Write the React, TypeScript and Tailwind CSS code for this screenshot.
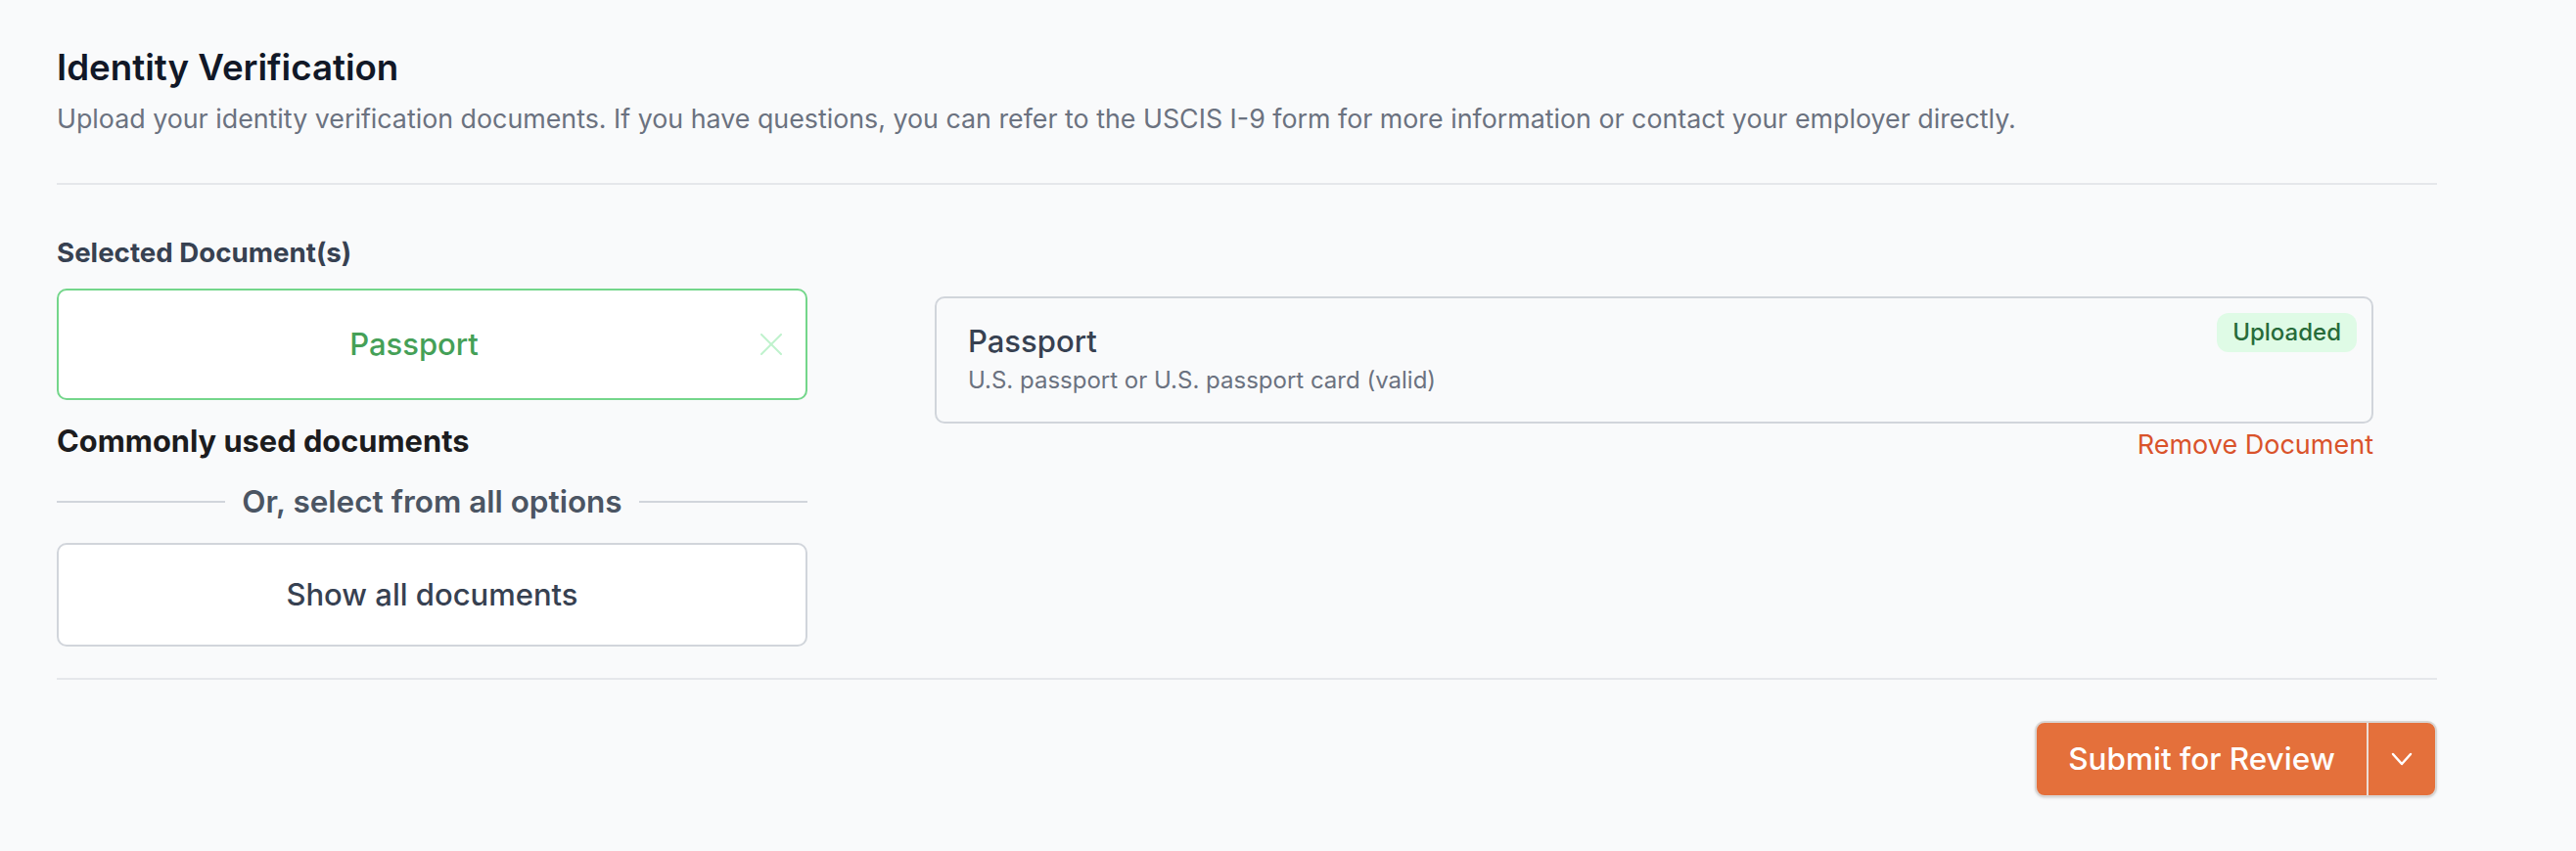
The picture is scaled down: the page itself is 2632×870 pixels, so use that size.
import React from "react";

function CloseIcon() {
  return (
    <svg width="22" height="22" viewBox="0 0 22 22" fill="none" stroke="#bff2cd" strokeWidth="2" strokeLinecap="round">
      <path d="M1 1 21 21" />
      <path d="M21 1 1 21" />
    </svg>
  );
}

function Chevron() {
  return (
    <svg width="22" height="14" viewBox="0 0 22 14" fill="none" stroke="#ffffff" strokeWidth="2.5" strokeLinecap="round" strokeLinejoin="round">
      <path d="M2 2 11 12 20 2" />
    </svg>
  );
}

export default function App() {
  return (
    <div className="min-h-screen bg-[#f9fafb] font-['Inter',sans-serif]">
      <div className="w-[2432px] ml-[58px] pt-[46px]">
        {/* Header */}
        <h1 className="text-[36.7px] leading-[46px] font-semibold text-[#111827]">Identity Verification</h1>
        <p className="mt-[12px] text-[26.8px] leading-[34px] text-[#6b7280]">
          Upload your identity verification documents. If you have questions, you can refer to the USCIS I-9 form for
          more information or contact your employer directly.
        </p>
        <div className="mt-[49px] h-[2px] bg-[#e5e7eb]" />

        {/* Documents */}
        <div className="flex mt-[52px]">
          <div className="w-[767px] shrink-0">
            <div className="text-[27.7px] leading-[34px] font-bold text-[#374151]">Selected Document(s)</div>

            <div className="mt-[20px] h-[114px] flex items-center gap-[15px] pl-[24px] pr-[24px] bg-white border-2 border-[#74d68b] rounded-[10px]">
              <span className="flex-1 text-center text-[31px] leading-[36px] font-medium text-[#45a057]">Passport</span>
              <CloseIcon />
            </div>

            <div className="mt-[24px] text-[30.8px] leading-[36px] font-bold text-[#1c1c1e]">Commonly used documents</div>

            <div className="mt-[26px] h-[36px] flex items-center gap-[17px]">
              <div className="flex-1 h-[2px] bg-[#d1d5db]" />
              <span className="text-[31.5px] leading-[36px] font-semibold text-[#4b5563]">Or, select from all options</span>
              <div className="flex-1 h-[2px] bg-[#d1d5db]" />
            </div>

            <button className="mt-[24px] w-full h-[106px] flex items-center justify-center bg-white border-2 border-[#d1d5db] rounded-[10px] text-[31px] font-medium text-[#374151]">
              Show all documents
            </button>
          </div>

          <div className="ml-[130px] w-[1470px] pt-[62px]">
            <div className="h-[130px] flex items-start justify-between border-2 border-[#d1d5db] rounded-[10px] pl-[32px] pr-[15px] pt-[15px]">
              <div className="pt-[10px]">
                <div className="text-[31px] leading-[38px] font-medium text-[#374151]">Passport</div>
                <div className="mt-[6px] text-[24px] leading-[30px] text-[#6b7280]">
                  U.S. passport or U.S. passport card (valid)
                </div>
              </div>
              <span className="h-[40px] px-[16px] flex items-center rounded-[12px] bg-[#dffbe6] text-[24px] font-medium text-[#276b3a]">
                Uploaded
              </span>
            </div>
            <div className="mt-[5px] text-right">
              <button className="text-[27px] leading-[33px] text-[#d9532b]">Remove Document</button>
            </div>
          </div>
        </div>

        <div className="mt-[32px] h-[2px] bg-[#e5e7eb]" />

        {/* Actions */}
        <div className="mt-[42px] flex justify-end">
          <div className="flex h-[78px] rounded-[10px] border-2 border-[#d9d6d4] bg-[#e4703b] shadow-sm overflow-hidden">
            <button className="w-[337px] text-[31.5px] font-medium text-white">Submit for Review</button>
            <div className="w-[2px] bg-[#ecdcd4]" />
            <button className="w-[68px] flex items-center justify-center">
              <Chevron />
            </button>
          </div>
        </div>
      </div>
    </div>
  );
}
